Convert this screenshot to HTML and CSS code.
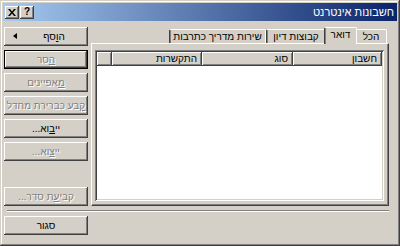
FILE: index.html
```html
<!DOCTYPE html>
<html lang="he" dir="rtl">
<head>
    <meta charset="UTF-8">
    <title>חשבונות אינטרנט</title>
    <link rel="stylesheet" href="styles.css">
</head>
<body>
    <div class="window">
        <div class="titlebar">
            <span class="title">חשבונות אינטרנט</span>
            <div class="title-btns">
                <span class="tbtn">
                    <svg width="8" height="7" viewBox="0 0 8 7"><path d="M0 0h2l2 2.5 2-2.5h2l-3 3.5 3 3.5h-2l-2-2.5-2 2.5h-2l3-3.5z" fill="#000"/></svg>
                </span>
                <span class="tbtn">?</span>
            </div>
        </div>

        <div class="main">
            <div class="row">
                <div class="tabs-area">
                    <div class="tabs">
                        <div class="tab t-all">הכל</div>
                        <div class="tab t-mail active">דואר</div>
                        <div class="tab t-news">קבוצות דיון</div>
                        <div class="tab t-dir">שירות מדריך כתרבות</div>
                    </div>
                    <div class="panel">
                        <div class="list">
                            <div class="list-head">
                                <div class="col c-acc">חשבון</div>
                                <div class="col c-type">סוג</div>
                                <div class="col c-conn">התקשרות</div>
                                <div class="col c-fill"></div>
                            </div>
                        </div>
                    </div>
                </div>

                <!-- side buttons -->
                <div class="side">
                    <button class="btn btn-add"><span>ה<u>ו</u>סף</span><span class="arrow"></span></button>
                    <button class="btn default off"><u>ה</u>סר</button>
                    <button class="btn off"><u>מ</u>אפיינים</button>
                    <button class="btn off"><u>ק</u>בע כברירת מחדל</button>
                    <button class="btn">יי<u>ב</u>וא...</button>
                    <button class="btn off">יי<u>צ</u>וא...</button>
                    <button class="btn off last">קבי<u>ע</u>ת סדר...</button>
                </div>
            </div>

            <div class="sep"></div>

            <div class="bottom">
                <button class="btn">סגור</button>
            </div>
        </div>
    </div>
</body>
</html>
```

FILE: styles.css
```css
* { box-sizing: border-box; margin: 0; padding: 0; }
body { width: 400px; height: 246px; overflow: hidden; background: #d4d0c8; font-family: 'Liberation Sans', 'DejaVu Sans', sans-serif; font-size: 10px; color: #000; }

.window {
    width: 400px; height: 246px; padding: 3px; background: #d4d0c8;
    box-shadow: inset -1px -1px #404040, inset 1px 1px #d4d0c8, inset -2px -2px #808080, inset 2px 2px #fff;
}

/* Title bar */
.titlebar {
    height: 18px; display: flex; align-items: center; justify-content: space-between;
    padding: 0 3px 0 2px;
    background: linear-gradient(to left, #0a246a, #a6caf0);
}
.title { color: #fff; font-size: 11px; }
.title-btns { display: flex; direction: ltr; gap: 1px; }
.tbtn {
    width: 14px; height: 13px; display: flex; align-items: center; justify-content: center;
    background: #d4d0c8; font-weight: bold; font-size: 10px; line-height: 1;
    box-shadow: inset -1px -1px #404040, inset 1px 1px #fff, inset -2px -2px #808080;
}

.main { padding: 6px 8px 0 1px; }
.row { display: flex; gap: 3px; }

/* Tabs */
.tabs-area { width: 298px; display: flex; flex-direction: column; }
.tabs { height: 16px; display: flex; align-items: flex-end; padding-right: 2px; }
.tab {
    height: 14px; text-align: center; line-height: 13px; white-space: nowrap; overflow: hidden;
    border-top: 1px solid #fff; border-right: 1px solid #fff; border-left: 1px solid #404040;
    border-radius: 2px 2px 0 0; background: #d4d0c8;
    box-shadow: inset 1px 0 #808080;
}
.tab.active {
    height: 17px; margin: 0 -2px -1px; position: relative; z-index: 1; line-height: 14px;
}
.t-all { width: 32px; }
.t-mail { width: 33px; }
.t-news { width: 60px; }
.t-dir { width: 97px; }

.panel {
    height: 163px; display: flex; padding: 6px 4px 4px 3px;
    border-top: 1px solid #fff; border-right: 1px solid #404040; border-left: 1px solid #fff;
    border-bottom: 1px solid #404040;
    box-shadow: inset -1px -1px #808080;
}
.list {
    flex: 1; background: #fff; padding: 2px;
    box-shadow: inset 1px 1px #808080, inset -1px -1px #fff, inset 2px 2px #404040, inset -2px -2px #d4d0c8;
}
.list-head { display: flex; height: 14px; }
.col {
    background: #d4d0c8; padding: 0 5px; line-height: 13px; white-space: nowrap;
    box-shadow: inset -1px -1px #404040, inset 1px 1px #fff, inset -2px -2px #808080;
}
.c-acc { width: 89px; }
.c-type { width: 91px; }
.c-conn { width: 90px; }
.c-fill { flex: 1; }

/* Buttons */
.side { width: 84px; height: 179px; display: flex; flex-direction: column; gap: 4px; }
.btn {
    width: 84px; height: 19px; border: none; background: #d4d0c8; white-space: nowrap;
    font-family: inherit; font-size: 10px; color: #000; text-align: center;
    box-shadow: inset -1px -1px #404040, inset 1px 1px #fff, inset -2px -2px #808080;
}
.btn.off { color: #808080; text-shadow: 1px 1px 0 #fff; }
.btn.default {
    box-shadow: inset 0 0 0 1px #000, inset -2px -2px #404040, inset 2px 2px #fff, inset -3px -3px #808080;
}
.btn.last { margin-top: auto; }
.btn-add { position: relative; padding-left: 16px; }
.arrow {
    position: absolute; left: 9px; top: 6px; width: 0; height: 0;
    border-top: 3px solid transparent; border-bottom: 3px solid transparent; border-right: 4px solid #000;
}

.sep { height: 2px; margin: 4px 0 0 3px; border-top: 1px solid #808080; border-bottom: 1px solid #fff; }
.bottom { display: flex; justify-content: flex-end; padding-top: 4px; }
```
